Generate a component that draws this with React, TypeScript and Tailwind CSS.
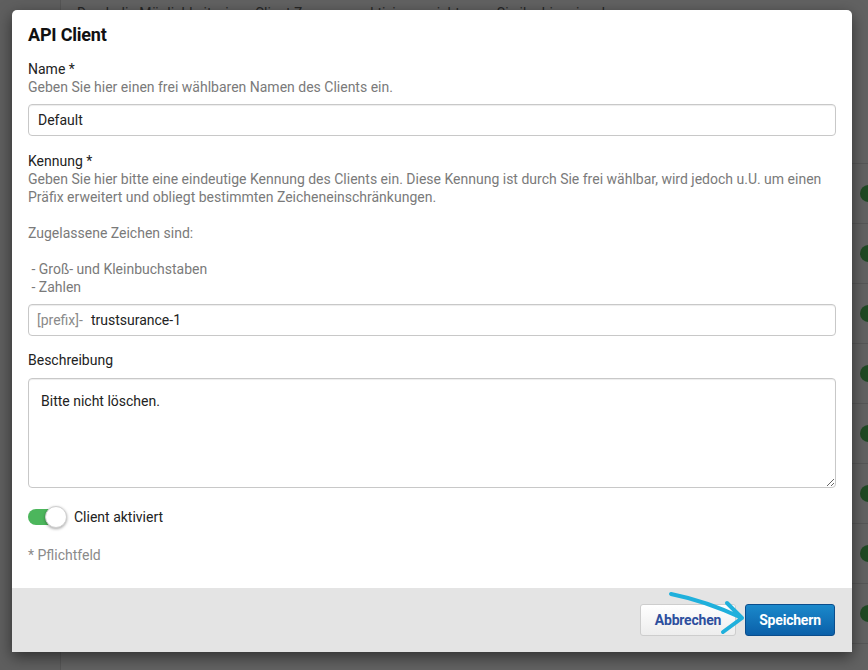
import React from "react";

const ROWS = [0, 1, 2, 3, 4, 5, 6, 7];

// Background page, dimmed by the modal backdrop.
function PageBehind() {
  return (
    <div className="flex h-full w-full bg-[#626262]">
      <div className="w-[61px] shrink-0 border-r border-[#565656] bg-[#5f5f5f]" />
      <div className="flex flex-1 flex-col">
        <div className="mt-[4px] pl-[16px] text-[14px] leading-[18px] text-[#262626]">
          Durch die Möglichkeit, einen Client Zugang zu aktivieren, nicht ganz Sie ihn hier einsehen.
        </div>
        <div className="mt-[141px] border-t border-[#575757]">
          {ROWS.map((i) => (
            <div key={i} className="flex h-[60px] items-center justify-end border-b border-[#575757]">
              <div className="-mr-[9px] h-[17px] w-[17px] rounded-full bg-[#1f4a23]" />
            </div>
          ))}
        </div>
      </div>
    </div>
  );
}

function Label({ children }: { children: React.ReactNode }) {
  return <div className="text-[14px] leading-[18px] text-[#222]">{children}</div>;
}

function Help({ children }: { children: React.ReactNode }) {
  return <div className="text-[14px] leading-[18px] text-[#7a7a7a]">{children}</div>;
}

const FIELD =
  "rounded-[4px] border border-[#c8c8c8] bg-white shadow-[inset_0_1px_1px_rgba(0,0,0,0.075)] text-[14px] text-[#222]";

export default function App() {
  return (
    <div
      className="relative h-[670px] w-[868px] overflow-hidden"
      style={{ fontFamily: "Roboto, 'Liberation Sans', sans-serif" }}
    >
      <PageBehind />

      {/* modal */}
      <div className="absolute left-[12px] top-[10px] flex h-[642px] w-[840px] flex-col overflow-hidden rounded-t-[5px] bg-white shadow-[0_5px_15px_rgba(0,0,0,0.5)]">
        <div className="flex-1 px-[16px] pt-[13px]">
          <h2 className="text-[18px] font-bold leading-[24px] tracking-[-0.2px] text-[#111]">API Client</h2>

          <div className="mt-[13px]">
            <Label>Name *</Label>
            <Help>Geben Sie hier einen frei wählbaren Namen des Clients ein.</Help>
            <div className={`mt-[8px] flex h-[32px] items-center px-[9px] ${FIELD}`}>Default</div>
          </div>

          <div className="mt-[16px]">
            <Label>Kennung *</Label>
            <Help>
              Geben Sie hier bitte eine eindeutige Kennung des Clients ein. Diese Kennung ist durch Sie frei wählbar, wird jedoch u.U. um einen Präfix erweitert und obliegt bestimmten Zeicheneinschränkungen.
            </Help>
            <Help>&nbsp;</Help>
            <Help>Zugelassene Zeichen sind:</Help>
            <Help>&nbsp;</Help>
            <Help>&nbsp;- Groß- und Kleinbuchstaben</Help>
            <Help>&nbsp;- Zahlen</Help>
            <div className={`mt-[8px] flex h-[32px] items-center px-[8px] ${FIELD}`}>
              <span className="text-[#8a8a8a]">[prefix]-</span>
              <span className="ml-[8px]">trustsurance-1</span>
            </div>
          </div>

          <div className="mt-[15px]">
            <Label>Beschreibung</Label>
            <textarea
              readOnly
              defaultValue="Bitte nicht löschen."
              className={`mt-[9px] block h-[110px] w-full px-[12px] py-[12px] leading-[20px] outline-none ${FIELD}`}
            />
          </div>

          <div className="mt-[17px] flex h-[24px] items-center">
            <div className="relative h-[22px] w-[40px]">
              <div className="absolute left-0 top-[3px] h-[16px] w-[36px] rounded-full bg-[#4cb65c]" />
              <div className="absolute left-[17px] top-0 h-[22px] w-[22px] rounded-full border border-[#d0d0d0] bg-white shadow-[0_1px_3px_rgba(0,0,0,0.35)]" />
            </div>
            <span className="ml-[6px] text-[14px] text-[#222]">Client aktiviert</span>
          </div>

          <div className="mt-[17px] text-[14px] leading-[18px] text-[#8a8a8a]">* Pflichtfeld</div>
        </div>

        <div className="flex h-[64px] items-center justify-end gap-[9px] bg-[#e4e4e4] pr-[17px]">
          <button className="h-[32px] w-[96px] rounded-[3px] border border-[#cdcdcd] bg-gradient-to-b from-white to-[#ededed] text-[14px] font-bold tracking-[-0.2px] text-[#2d4f9e]">
            Abbrechen
          </button>
          <button className="h-[32px] w-[90px] rounded-[3px] border border-[#0a4d8c] bg-gradient-to-b from-[#1b89cb] to-[#0b60a9] text-[14px] font-bold tracking-[-0.2px] text-white">
            Speichern
          </button>
        </div>
      </div>

      {/* annotation arrow drawn over the screenshot */}
      <svg className="absolute left-0 top-0" width="868" height="670" viewBox="0 0 868 670" fill="none">
        <path
          d="M671 594 Q706 601 742 618 M727 603 L742 618 L723 632"
          stroke="#1fb0dc"
          strokeWidth="4"
          strokeLinecap="round"
          strokeLinejoin="round"
        />
      </svg>
    </div>
  );
}
